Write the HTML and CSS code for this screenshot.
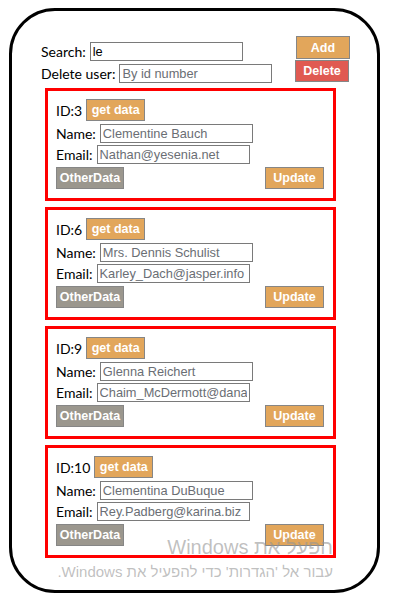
FILE: index.html
```html
<!DOCTYPE html>
<html>
<head>
<meta charset="utf-8">
<link rel="stylesheet" href="styles.css">
</head>
<body>
<div class="frame">
  <div class="top">
    <div class="top-left">
      <div class="row"><span class="lbl">Search:</span><input class="inp inp-search" value="le"></div>
      <div class="row"><span class="lbl">Delete user:</span><input class="inp inp-del" placeholder="By id number"></div>
    </div>
    <div class="top-right">
      <button class="btn btn-orange btn-add">Add</button>
      <button class="btn btn-red btn-delete">Delete</button>
    </div>
  </div>
  <div class="cards">
    <div class="card">
      <div class="crow r1"><span class="lbl">ID:3</span><button class="btn btn-orange btn-get">get data</button></div>
      <div class="crow r2"><span class="lbl">Name:</span><input class="inp" placeholder="Clementine Bauch"></div>
      <div class="crow r3"><span class="lbl">Email:</span><input class="inp" placeholder="Nathan@yesenia.net"></div>
      <div class="crow r4"><button class="btn btn-gray">OtherData</button><button class="btn btn-orange btn-upd">Update</button></div>
    </div>
    <div class="card">
      <div class="crow r1"><span class="lbl">ID:6</span><button class="btn btn-orange btn-get">get data</button></div>
      <div class="crow r2"><span class="lbl">Name:</span><input class="inp" placeholder="Mrs. Dennis Schulist"></div>
      <div class="crow r3"><span class="lbl">Email:</span><input class="inp" placeholder="Karley_Dach@jasper.info"></div>
      <div class="crow r4"><button class="btn btn-gray">OtherData</button><button class="btn btn-orange btn-upd">Update</button></div>
    </div>
    <div class="card">
      <div class="crow r1"><span class="lbl">ID:9</span><button class="btn btn-orange btn-get">get data</button></div>
      <div class="crow r2"><span class="lbl">Name:</span><input class="inp" placeholder="Glenna Reichert"></div>
      <div class="crow r3"><span class="lbl">Email:</span><input class="inp" placeholder="Chaim_McDermott@dana.io"></div>
      <div class="crow r4"><button class="btn btn-gray">OtherData</button><button class="btn btn-orange btn-upd">Update</button></div>
    </div>
    <div class="card">
      <div class="crow r1"><span class="lbl">ID:10</span><button class="btn btn-orange btn-get">get data</button></div>
      <div class="crow r2"><span class="lbl">Name:</span><input class="inp" placeholder="Clementina DuBuque"></div>
      <div class="crow r3"><span class="lbl">Email:</span><input class="inp" placeholder="Rey.Padberg@karina.biz"></div>
      <div class="crow r4"><button class="btn btn-gray">OtherData</button><button class="btn btn-orange btn-upd">Update</button></div>
    </div>
  </div>
</div>
<div class="watermark" dir="rtl">
  <div class="wm1">הפעל את Windows</div>
  <div class="wm2">עבור אל 'הגדרות' כדי להפעיל את Windows.</div>
</div>
</body>
</html>
```
FILE: styles.css
```css
html, body {
  margin: 0;
  padding: 0;
  background: #fff;
}
body {
  position: relative;
  width: 404px;
  height: 604px;
  overflow: hidden;
  font-family: Lato, "Noto Sans", sans-serif;
}
.frame {
  box-sizing: border-box;
  margin: 8px 0 0 9px;
  width: 371px;
  height: 585px;
  border: 3px solid #000;
  border-radius: 46px;
  padding: 25px 0 0 29px;
}
.top {
  display: flex;
  justify-content: space-between;
  width: 309px;
}
.top-left {
  display: flex;
  flex-direction: column;
  gap: 3px;
  padding-top: 6px;
}
.row {
  display: flex;
  align-items: center;
  gap: 4px;
  height: 19px;
}
.lbl {
  font-size: 14px;
  color: #000;
  line-height: 19px;
  white-space: nowrap;
}
.inp {
  box-sizing: border-box;
  width: 153px;
  height: 19px;
  border: 1px solid #7a7a7a;
  padding: 0 2px;
  margin: 0;
  font-family: "Liberation Sans", Arial, sans-serif;
  font-size: 12.8px;
  color: #000;
  outline: none;
}
.inp::placeholder {
  color: #6a6e74;
  opacity: 1;
}
.top-right {
  display: flex;
  flex-direction: column;
  align-items: flex-end;
  gap: 1px;
}
.btn {
  box-sizing: border-box;
  height: 22px;
  border: 1px solid #868686;
  padding: 0 7px;
  margin: 0;
  color: #fff;
  font-family: "Liberation Sans", Arial, sans-serif;
  font-weight: bold;
  font-size: 12.5px;
  line-height: 20px;
}
.btn-orange { background: #e2a65b; }
.btn-red { background: #e05a52; }
.btn-gray { background: #9b978e; width: 68px; padding: 0; }
.btn-add { width: 54px; height: 23px; }
.btn-delete { width: 54px; margin-right: 1px; }
.btn-get { width: 59px; padding: 0; }
.btn-upd { width: 59px; padding: 0; }
.cards {
  display: flex;
  flex-direction: column;
  gap: 6px;
  margin: 5px 0 0 4px;
}
.card {
  box-sizing: border-box;
  width: 291px;
  height: 113px;
  border: 3px solid #f00;
  padding: 8px 9px 0 8px;
  display: flex;
  flex-direction: column;
}
.crow {
  display: flex;
  align-items: center;
  gap: 4px;
}
.r1 { height: 22px; }
.r2 { height: 19px; margin-top: 3px; }
.r3 { height: 19px; margin-top: 2px; }
.r4 { height: 22px; margin-top: 3px; justify-content: space-between; }
.watermark {
  position: absolute;
  right: 71px;
  top: 534px;
  text-align: right;
  color: rgba(150, 150, 150, 0.6);
  font-family: "Liberation Sans", "DejaVu Sans", sans-serif;
  pointer-events: none;
}
.wm1 {
  font-size: 20px;
  line-height: 26px;
}
.wm2 {
  font-size: 15px;
  line-height: 20px;
  margin-top: 2px;
}
```
